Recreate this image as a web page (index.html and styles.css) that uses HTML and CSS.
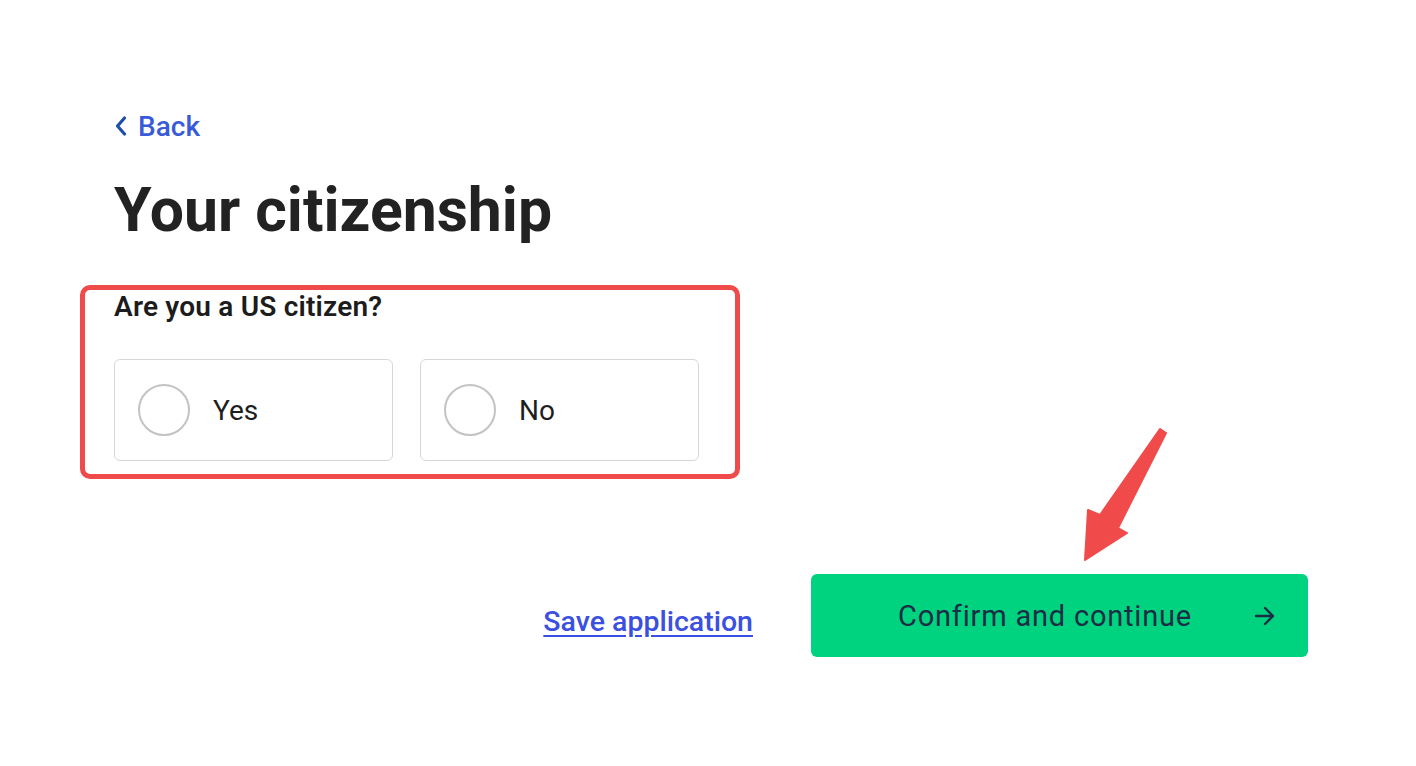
FILE: index.html
```html
<!DOCTYPE html>
<html lang="en">
<head>
<meta charset="utf-8">
<title>Your citizenship</title>
<link rel="stylesheet" href="styles.css">
</head>
<body>
<main class="page">
  <a class="back" href="#">
    <svg class="back-icon" width="14" height="22" viewBox="0 0 14 22" aria-hidden="true"><path d="M10.5 3 L3.5 11 L10.5 19" fill="none" stroke="#1f4ea8" stroke-width="3.2" stroke-linecap="round" stroke-linejoin="round"/></svg>
    <span>Back</span>
  </a>
  <h1 class="title">Your citizenship</h1>
  <fieldset class="question-box">
    <legend class="question">Are you a US citizen?</legend>
    <div class="options">
      <label class="option"><span class="radio"></span><span class="option-label">Yes</span></label>
      <label class="option"><span class="radio"></span><span class="option-label">No</span></label>
    </div>
  </fieldset>
  <div class="actions">
    <a class="save-link" href="#">Save application</a>
    <button class="confirm" type="button">
      <span>Confirm and continue</span>
      <svg class="confirm-icon" width="22" height="20" viewBox="0 0 22 20" aria-hidden="true"><path d="M2 10 H19 M11 2 L19 10 L11 18" fill="none" stroke="#1b2d45" stroke-width="2.4" stroke-linecap="round" stroke-linejoin="round"/></svg>
    </button>
  </div>
</main>
<svg class="annotation-arrow" width="95" height="140" viewBox="0 0 95 140" aria-hidden="true">
  <polygon points="80,4 86,8 38,103 47,108 5,135 8,85 20,90" fill="#f04b4a" stroke="#f04b4a" stroke-width="2" stroke-linejoin="round"/>
</svg>
</body>
</html>
```
FILE: styles.css
```css
* { box-sizing: border-box; }
html, body { margin: 0; padding: 0; background: #ffffff; }
body {
  font-family: Roboto, "Noto Sans", "Liberation Sans", sans-serif;
  color: #222222;
  width: 1416px;
  height: 766px;
  overflow: hidden;
  position: relative;
}
.page {
  padding: 108px 108px 0 114px;
  display: flex;
  flex-direction: column;
  align-items: flex-start;
}
.back {
  display: flex;
  align-items: center;
  gap: 10px;
  height: 36px;
  color: #3a5bd8;
  text-decoration: none;
  font-size: 28px;
  font-weight: 500;
}
.back-icon { display: block; }
.title {
  margin: 32px 0 0 0;
  font-size: 60.7px;
  font-weight: 700;
  line-height: 70px;
  color: #222222;
}
.question-box {
  margin: 39px 0 0 -34px;
  border: 5px solid #ef4b4b;
  border-radius: 10px;
  padding: 0 36px 13px 29px;
  min-width: 0;
}
.question {
  float: left;
  padding: 0;
  margin: 0;
  font-size: 28px;
  font-weight: 600;
  line-height: 34px;
  color: #1c1c1c;
  letter-spacing: 0.2px;
}
.options {
  clear: both;
  display: flex;
  gap: 27px;
  padding-top: 35px;
}
.option {
  width: 279px;
  height: 102px;
  border: 1px solid #d7d7d7;
  border-radius: 6px;
  display: flex;
  align-items: center;
  padding-left: 23px;
  gap: 23px;
}
.radio {
  width: 52px;
  height: 52px;
  border-radius: 50%;
  border: 2px solid #c3c3c3;
  flex: none;
}
.option-label {
  font-size: 28px;
  color: #1e1e1e;
}
.actions {
  align-self: stretch;
  display: flex;
  justify-content: flex-end;
  align-items: center;
  gap: 58px;
  margin-top: 95px;
}
.save-link {
  font-size: 28.5px;
  font-weight: 500;
  color: #3b4fe0;
  text-decoration: underline;
  text-underline-offset: 4px;
  margin-top: 11px;
}
.confirm {
  width: 497px;
  height: 83px;
  border: none;
  border-radius: 6px;
  background: #00d37f;
  color: #1b2d45;
  font-family: inherit;
  font-size: 29px;
  letter-spacing: 0.8px;
  display: flex;
  align-items: center;
  padding: 0 32px 0 87px;
  cursor: pointer;
}
.confirm-icon { margin-left: auto; display: block; }
.annotation-arrow {
  position: absolute;
  left: 1080px;
  top: 425px;
}
```
